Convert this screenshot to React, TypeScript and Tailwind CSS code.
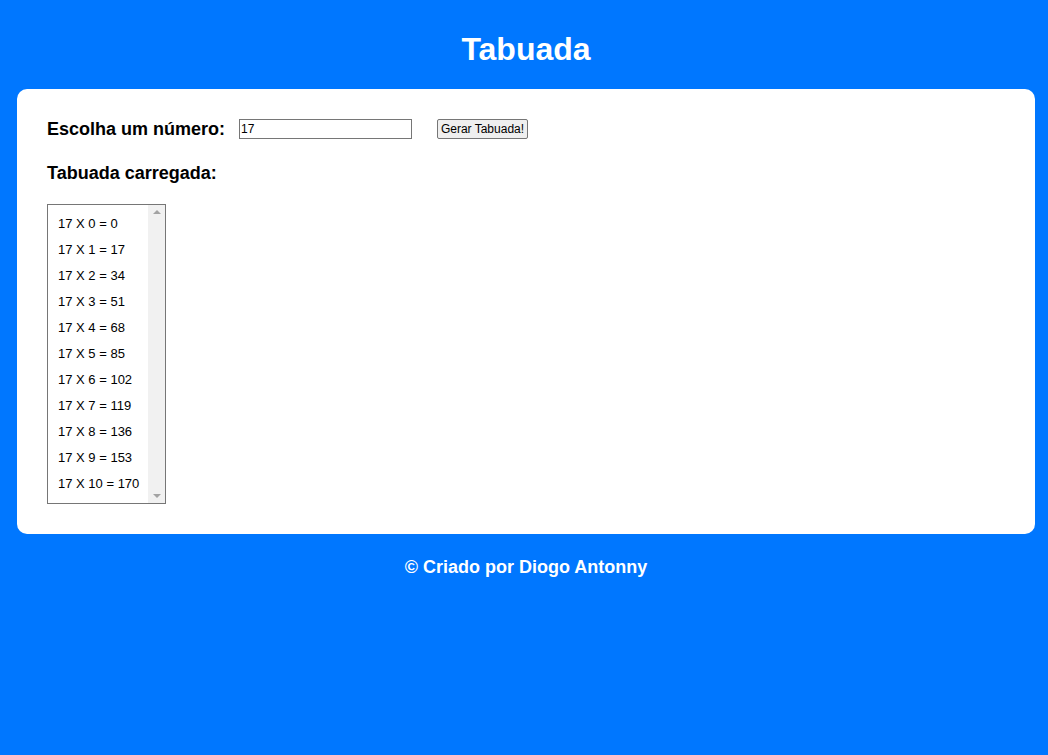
import React from "react";

export default function App() {
  const rows = Array.from({ length: 11 }, (_, i) => `17 X ${i} = ${17 * i}`);
  return (
    <div className="min-h-[755px] w-full bg-[#0077ff] flex flex-col items-center" style={{ fontFamily: '"Liberation Sans", Arial, sans-serif' }}>
      <h1 className="text-white font-bold text-[32px] leading-none pt-[33px] pb-[24px] ml-[4px]">Tabuada</h1>
      <div className="self-start ml-[17px] w-[1018px] h-[445px] bg-white rounded-[10px] px-[30px] pt-[30px]">
        <div className="flex items-center h-[20px]">
          <span className="font-bold text-[18px] text-black w-[192px]">Escolha um número:</span>
          <input
            defaultValue="17"
            className="w-[173px] h-[20px] border border-[#767676] text-[12px] px-[1px] text-black outline-none"
            style={{ fontFamily: '"Liberation Sans", Arial, sans-serif' }}
          />
          <button className="ml-[25px] w-[91px] h-[20px] border border-[#767676] bg-[#efefef] rounded-[2px] text-[12px] text-black leading-none">
            Gerar Tabuada!
          </button>
        </div>
        <div className="font-bold text-[18px] text-black mt-[24px] leading-[20px]">Tabuada carregada:</div>
        <div className="mt-[21px] w-[119px] h-[300px] border border-[#767676] flex">
          <div className="flex-1 pt-[6px] pl-[10px]">
            {rows.map((r) => (
              <div key={r} className="h-[26px] text-[13px] leading-[26px] text-black whitespace-nowrap">{r}</div>
            ))}
          </div>
          <div className="w-[17px] h-full bg-[#f1f1f1] flex flex-col justify-between items-center py-[5px]">
            <div className="w-0 h-0 border-l-[4px] border-r-[4px] border-b-[4px] border-l-transparent border-r-transparent border-b-[#a3a3a3]" />
            <div className="w-0 h-0 border-l-[4px] border-r-[4px] border-t-[4px] border-l-transparent border-r-transparent border-t-[#a3a3a3]" />
          </div>
        </div>
      </div>
      <div className="text-white font-bold text-[18px] mt-[20px] ml-[4px]">© Criado por Diogo Antonny</div>
    </div>
  );
}
